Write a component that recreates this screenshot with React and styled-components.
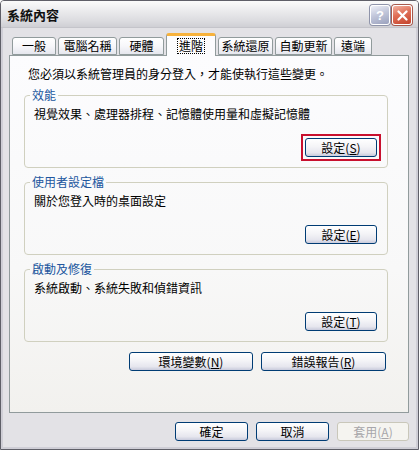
import styled, { createGlobalStyle } from "styled-components";

const Global = createGlobalStyle`
  html, body { margin: 0; padding: 0; background: #ffffff; }
  * { box-sizing: border-box; }
`;

const FONT = `"Noto Sans CJK TC", "Liberation Sans", sans-serif`;

const Window = styled.div`
  width: 419px;
  height: 450px;
  border: 1px solid #5f5f68;
  border-radius: 4px 4px 0 0;
  background: #e3e2e6;
  display: flex;
  flex-direction: column;
  font-family: ${FONT};
  font-size: 12px;
  color: #000;
  overflow: hidden;
`;

const TitleBar = styled.div`
  height: 27px;
  flex: none;
  display: flex;
  align-items: center;
  justify-content: space-between;
  padding: 0 6px 0 6px;
  background: linear-gradient(180deg, #fbfbfb 0%, #ececee 35%, #dcdce0 75%, #cfcfd4 100%);
  border-bottom: 1px solid #c4c4ca;

  .title {
    font-weight: bold;
    font-size: 13px;
    line-height: 16px;
    color: #111;
    padding-top: 2px;
  }
`;

const CaptionButtons = styled.div`
  display: flex;
  gap: 2px;
  padding-top: 2px;
`;

const CaptionButton = styled.div`
  width: 20px;
  height: 20px;
  border: 1px solid #ffffff;
  border-radius: 3px;
  display: flex;
  align-items: center;
  justify-content: center;
  color: #fff;
  font-family: "Liberation Sans", sans-serif;
  font-weight: bold;
  font-size: 13px;
  box-shadow: 0 0 0 1px ${(p) => (p.$close ? "#a8594c" : "#8f94aa")};
  background: ${(p) =>
    p.$close
      ? "linear-gradient(160deg, #f3b3a2 0%, #df6e56 45%, #c4432c 100%)"
      : "linear-gradient(160deg, #eef0f8 0%, #c2c7db 45%, #9aa1bd 100%)"};
`;

const Frame = styled.div`
  flex: 1;
  display: flex;
  flex-direction: column;
  border: 2px solid #cfced6;
  border-top: none;
  padding: 5px 7px 0 6px;
`;

const TabRow = styled.div`
  height: 22px;
  display: flex;
  align-items: flex-end;
  gap: 2px;
  padding-left: 3px;
  position: relative;
  z-index: 1;
`;

const Tab = styled.div`
  width: ${(p) => p.$w}px;
  height: ${(p) => (p.$active ? 23 : 18)}px;
  margin-bottom: ${(p) => (p.$active ? -1 : 0)}px;
  border: 1px solid #919b9c;
  border-bottom: ${(p) => (p.$active ? "none" : "1px solid #919b9c")};
  border-top: ${(p) => (p.$active ? "3px solid #f7b23c" : "1px solid #919b9c")};
  border-radius: 3px 3px 0 0;
  background: ${(p) =>
    p.$active
      ? "#fcfcfe"
      : "linear-gradient(180deg, #ffffff 0%, #f7f7fa 50%, #e6e7ee 100%)"};
  display: flex;
  align-items: center;
  justify-content: center;
  line-height: 14px;
  white-space: nowrap;

  span {
    padding: 0 1px;
    border: 1px dotted ${(p) => (p.$active ? "#000" : "transparent")};
  }
`;

const Panel = styled.div`
  height: 358px;
  flex: none;
  border: 1px solid #919b9c;
  background: linear-gradient(180deg, #fcfcfe 0%, #f8f8f8 60%, #f2f1ee 100%);
  padding: 11px 20px 0 14px;
  display: flex;
  flex-direction: column;
  gap: 7px;
`;

const Intro = styled.div`
  line-height: 14px;
  padding-left: 4px;
`;

const Group = styled.fieldset`
  margin: 0;
  padding: 0 10px 10px 9px;
  border: 1px solid #d0d0bf;
  border-radius: 4px;
  min-inline-size: 0;

  legend {
    margin-left: -4px;
    padding: 0 2px;
    color: #21569e;
    line-height: 14px;
  }
`;

const Desc = styled.div`
  margin-top: 5px;
  line-height: 14px;
  height: 14px;
`;

const ButtonRow = styled.div`
  display: flex;
  justify-content: flex-end;
  gap: ${(p) => p.$gap || 8}px;
  margin-top: ${(p) => p.$top || 0}px;
  padding-right: ${(p) => p.$right || 0}px;
`;

const Button = styled.div`
  width: ${(p) => p.$w || 72}px;
  height: 19px;
  border: 1px solid ${(p) => (p.$disabled ? "#c9c7ba" : "#003c74")};
  border-radius: 3px;
  background: ${(p) =>
    p.$disabled
      ? "#f5f4f0"
      : "linear-gradient(180deg, #ffffff 0%, #f4f4f7 45%, #e6e6ee 80%, #c9cbdc 100%)"};
  color: ${(p) => (p.$disabled ? "#a7a6aa" : "#000")};
  display: flex;
  align-items: center;
  justify-content: center;
  line-height: 14px;
  white-space: nowrap;

  u { text-decoration: underline; text-underline-offset: 1px; }
`;

const Highlight = styled.div`
  margin: -4px;
  padding: 2px;
  border: 2px solid #c8102e;
`;

const Footer = styled.div`
  display: flex;
  justify-content: flex-end;
  gap: 8px;
  margin-top: 9px;
`;

const tabs = [
  { label: "一般", w: 44 },
  { label: "電腦名稱", w: 59 },
  { label: "硬體", w: 45 },
  { label: "進階", w: 50, active: true },
  { label: "系統還原", w: 55 },
  { label: "自動更新", w: 57 },
  { label: "遠端", w: 38 },
];

function Key({ k }) {
  return (
    <>
      (<u>{k}</u>)
    </>
  );
}

export default function App() {
  return (
    <>
      <Global />
      <Window>
        <TitleBar>
          <div className="title">系統內容</div>
          <CaptionButtons>
            <CaptionButton>?</CaptionButton>
            <CaptionButton $close>
              <svg width="11" height="11" viewBox="0 0 11 11">
                <path d="M1.5 1.5 L9.5 9.5 M9.5 1.5 L1.5 9.5" stroke="#fff" strokeWidth="2.2" strokeLinecap="round" />
              </svg>
            </CaptionButton>
          </CaptionButtons>
        </TitleBar>
        <Frame>
          <TabRow>
            {tabs.map((t) => (
              <Tab key={t.label} $w={t.w} $active={t.active}>
                <span>{t.label}</span>
              </Tab>
            ))}
          </TabRow>
          <Panel>
            <Intro>您必須以系統管理員的身分登入，才能使執行這些變更。</Intro>
            <Group>
              <legend>效能</legend>
              <Desc>視覺效果、處理器排程、記憶體使用量和虛擬記憶體</Desc>
              <ButtonRow $top={17}>
                <Highlight>
                  <Button>設定<Key k="S" /></Button>
                </Highlight>
              </ButtonRow>
            </Group>
            <Group>
              <legend>使用者設定檔</legend>
              <Desc>關於您登入時的桌面設定</Desc>
              <ButtonRow $top={17}>
                <Button>設定<Key k="E" /></Button>
              </ButtonRow>
            </Group>
            <Group>
              <legend>啟動及修復</legend>
              <Desc>系統啟動、系統失敗和偵錯資訊</Desc>
              <ButtonRow $top={17}>
                <Button>設定<Key k="T" /></Button>
              </ButtonRow>
            </Group>
            <ButtonRow $top={3} $right={2}>
              <Button $w={124}>環境變數<Key k="N" /></Button>
              <Button $w={125}>錯誤報告<Key k="R" /></Button>
            </ButtonRow>
          </Panel>
          <Footer>
            <Button $w={73}>確定</Button>
            <Button $w={73}>取消</Button>
            <Button $w={72} $disabled>套用<Key k="A" /></Button>
          </Footer>
        </Frame>
      </Window>
    </>
  );
}
